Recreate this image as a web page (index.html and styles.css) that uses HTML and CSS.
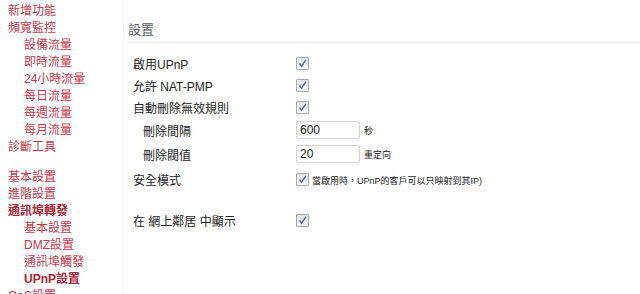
FILE: index.html
```html
<!DOCTYPE html>
<html lang="zh-Hant">
<head>
    <meta charset="UTF-8">
    <title>UPnP設置</title>
    <link rel="stylesheet" href="styles.css">
</head>
<body>
    <div class="page">
        <div class="sidebar">
            <a class="nav">新增功能</a>
            <a class="nav">頻寬監控</a>
            <a class="nav sub">設備流量</a>
            <a class="nav sub">即時流量</a>
            <a class="nav sub">24小時流量</a>
            <a class="nav sub">每日流量</a>
            <a class="nav sub">每週流量</a>
            <a class="nav sub">每月流量</a>
            <a class="nav">診斷工具</a>
            <div class="nav-gap"></div>
            <a class="nav">基本設置</a>
            <a class="nav">進階設置</a>
            <a class="nav active">通訊埠轉發</a>
            <a class="nav sub">基本設置</a>
            <a class="nav sub">DMZ設置</a>
            <a class="nav sub">通訊埠觸發</a>
            <a class="nav sub active">UPnP設置</a>
            <a class="nav">QoS設置</a>
        </div>

        <div class="content">
            <h2 class="section-title">設置</h2>

            <div class="form">
                <div class="row">
                    <span class="label">啟用UPnP</span>
                    <span class="check"></span>
                </div>
                <div class="row">
                    <span class="label">允許 NAT-PMP</span>
                    <span class="check"></span>
                </div>
                <div class="row">
                    <span class="label">自動刪除無效規則</span>
                    <span class="check"></span>
                </div>
                <div class="row row-input">
                    <span class="label indent">刪除間隔</span>
                    <input class="field" type="text" value="600">
                    <span class="note">秒</span>
                </div>
                <div class="row row-input">
                    <span class="label indent">刪除閥值</span>
                    <input class="field" type="text" value="20">
                    <span class="note">重定向</span>
                </div>
                <div class="row row-safe">
                    <span class="label">安全模式</span>
                    <span class="check"></span>
                    <span class="note help">當啟用時，UPnP的客戶可以只映射到其IP)</span>
                </div>
                <div class="row row-last">
                    <span class="label">在 網上鄰居 中顯示</span>
                    <span class="check"></span>
                </div>
            </div>
        </div>
    </div>
</body>
</html>
```

FILE: styles.css
```css
body {
    margin: 0;
    font-family: 'Liberation Sans', 'Noto Sans CJK TC', sans-serif;
    font-size: 12px;
    color: #222;
    background: #fff;
}

.page {
    display: flex;
    height: 294px;
    overflow: hidden;
}

/* left menu */
.sidebar {
    width: 115px;
    flex-shrink: 0;
    padding: 3px 0 0 8px;
    border-right: 1px solid #f2f2f2;
    display: flex;
    flex-direction: column;
}

.nav {
    display: block;
    height: 17px;
    line-height: 17px;
    color: #bf3a4a;
    white-space: nowrap;
    text-decoration: none;
}

.nav.sub {
    padding-left: 16px;
}

.nav.active {
    font-weight: bold;
    color: #a82535;
}

.nav-gap {
    height: 13px;
    flex-shrink: 0;
}

/* main area */
.content {
    flex: 1;
    padding-left: 4px;
}

.section-title {
    margin: 22px 0 0 0;
    padding-bottom: 4px;
    font-size: 13px;
    line-height: 16px;
    font-weight: normal;
    color: #5c5c68;
    border-bottom: 1px solid #eaeaea;
}

.form {
    margin-top: 9px;
    padding-left: 5px;
}

.row {
    display: flex;
    align-items: center;
    height: 22px;
}

.row-input {
    height: 24px;
}

.row-safe {
    height: 26px;
}

.row-last {
    margin-top: 17px;
}

.label {
    width: 163px;
    flex-shrink: 0;
    color: #222;
}

.label.indent {
    padding-left: 10px;
    width: 153px;
}

.check {
    width: 11px;
    height: 11px;
    border: 1px solid #a8a8a8;
    border-radius: 1px;
    background-image: url("data:image/svg+xml,%3Csvg xmlns='http://www.w3.org/2000/svg' viewBox='0 0 11 11'%3E%3Cpath d='M2.5 5.5 L4.5 8.2 L8.8 1.8' fill='none' stroke='%235468c8' stroke-width='1.5'/%3E%3C/svg%3E"), linear-gradient(#e2e2e2, #fbfbfb);
    flex-shrink: 0;
}

.field {
    width: 56px;
    height: 14px;
    padding: 1px 3px;
    border: 1px solid #d4d4d4;
    border-radius: 2px;
    font-family: inherit;
    font-size: 12px;
    color: #222;
    outline: none;
}

.note {
    margin-left: 4px;
    font-size: 9px;
    color: #222;
}

.help {
    margin-left: 3px;
    margin-top: 3px;
    white-space: nowrap;
}
```
